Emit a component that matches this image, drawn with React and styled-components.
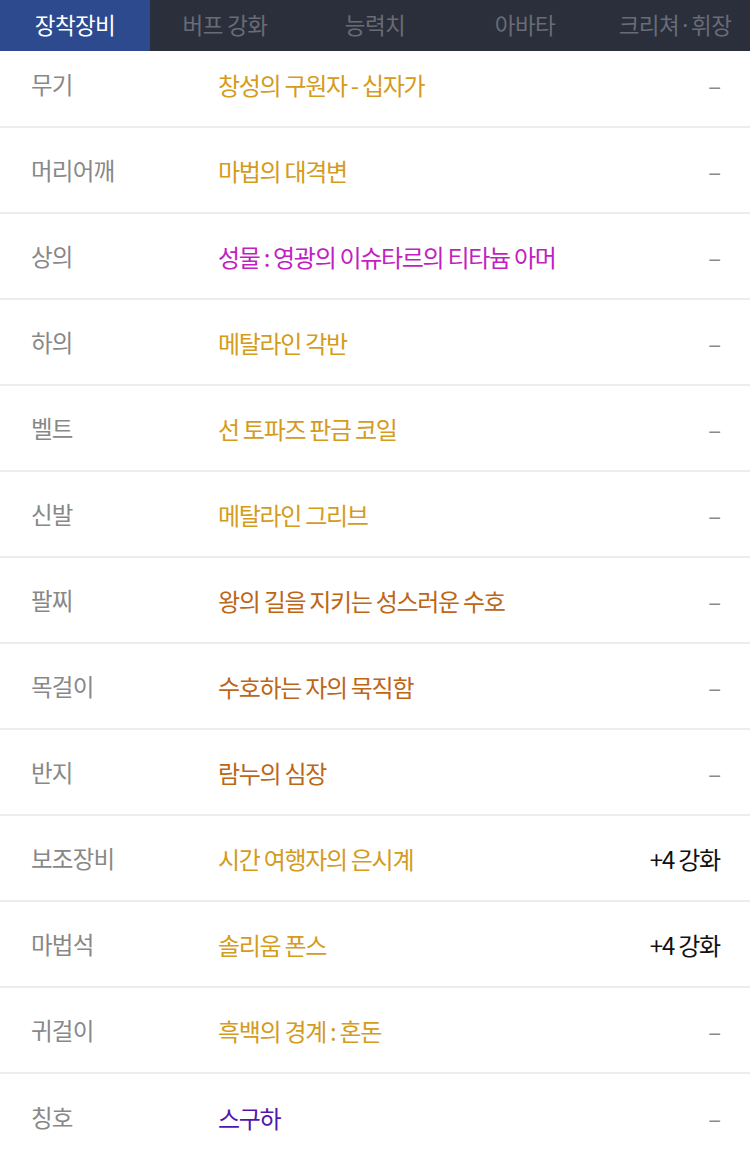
import React from "react";
import styled, { createGlobalStyle } from "styled-components";

const Global = createGlobalStyle`
  html, body { margin: 0; padding: 0; background: #ffffff; }
  body { font-family: "Noto Sans CJK KR", "Noto Sans", sans-serif; }
`;

const Page = styled.div`
  width: 750px;
  background: #fff;
`;

const TabBar = styled.nav`
  display: grid;
  grid-template-columns: repeat(5, 150px);
  height: 51px;
  background: #2b2f3b;
`;

const Tab = styled.div`
  display: flex;
  align-items: center;
  justify-content: center;
  font-size: 22.5px;
  letter-spacing: -0.6px;
  white-space: nowrap;
  color: ${(p) => (p.$active ? "#ffffff" : "#686c76")};
  background: ${(p) => (p.$active ? "#2d4a8e" : "transparent")};
  padding-bottom: 3px;
`;

const List = styled.div`
  display: flex;
  flex-direction: column;
`;

const Row = styled.div`
  display: grid;
  grid-template-columns: 187px 1fr auto;
  align-items: center;
  box-sizing: border-box;
  height: ${(p) => (p.$first ? "77px" : "86px")};
  padding: 0 30px ${(p) => (p.$first ? "9px" : "0")} 31px;
  border-bottom: ${(p) => (p.$last ? "none" : "2px solid #ededed")};
  font-size: 24px;
`;

const Label = styled.span`
  color: #888888;
  font-size: 23.5px;
  letter-spacing: -0.8px;
`;

const Item = styled.span`
  color: ${(p) => p.$color};
  letter-spacing: -1.3px;
  white-space: nowrap;
`;

const Value = styled.span`
  color: ${(p) => (p.$strong ? "#111111" : "#8a8a8a")};
  text-align: right;
  letter-spacing: -1.2px;
`;

const COLORS = {
  gold: "#d49b1c",
  brown: "#bd6618",
  magenta: "#c21ec1",
  purple: "#5316ad",
};

const tabs = ["장착장비", "버프 강화", "능력치", "아바타", "크리쳐·휘장"];

const rows = [
  ["무기", "창성의 구원자 - 십자가", "gold", "–"],
  ["머리어깨", "마법의 대격변", "gold", "–"],
  ["상의", "성물 : 영광의 이슈타르의 티타늄 아머", "magenta", "–"],
  ["하의", "메탈라인 각반", "gold", "–"],
  ["벨트", "선 토파즈 판금 코일", "gold", "–"],
  ["신발", "메탈라인 그리브", "gold", "–"],
  ["팔찌", "왕의 길을 지키는 성스러운 수호", "brown", "–"],
  ["목걸이", "수호하는 자의 묵직함", "brown", "–"],
  ["반지", "람누의 심장", "brown", "–"],
  ["보조장비", "시간 여행자의 은시계", "gold", "+4 강화"],
  ["마법석", "솔리움 폰스", "gold", "+4 강화"],
  ["귀걸이", "흑백의 경계 : 혼돈", "gold", "–"],
  ["칭호", "스구하", "purple", "–"],
];

export default function App() {
  return (
    <Page>
      <Global />
      <TabBar>
        {tabs.map((t, i) => (
          <Tab key={t} $active={i === 0}>
            {t}
          </Tab>
        ))}
      </TabBar>
      <List>
        {rows.map(([label, item, color, value], i) => (
          <Row key={label} $first={i === 0} $last={i === rows.length - 1}>
            <Label>{label}</Label>
            <Item $color={COLORS[color]}>{item}</Item>
            <Value $strong={value !== "–"}>{value}</Value>
          </Row>
        ))}
      </List>
    </Page>
  );
}
